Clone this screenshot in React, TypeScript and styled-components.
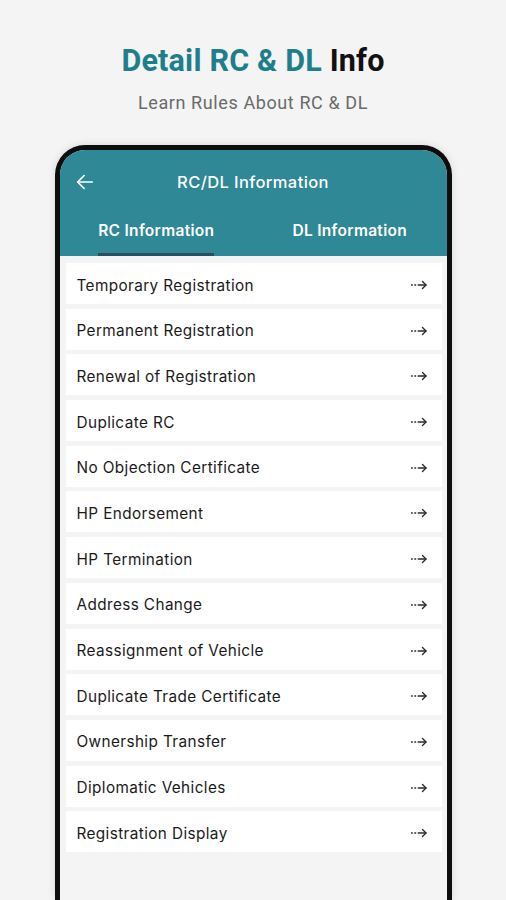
import React, { useState } from 'react';
import styled, { createGlobalStyle } from 'styled-components';

const GlobalStyle = createGlobalStyle`
  html, body {
    margin: 0;
    padding: 0;
    background: #f4f4f4;
  }
  body {
    font-family: Roboto, 'Liberation Sans', sans-serif;
  }
`;

const items = [
  'Temporary Registration',
  'Permanent Registration',
  'Renewal of Registration',
  'Duplicate RC',
  'No Objection Certificate',
  'HP Endorsement',
  'HP Termination',
  'Address Change',
  'Reassignment of Vehicle',
  'Duplicate Trade Certificate',
  'Ownership Transfer',
  'Diplomatic Vehicles',
  'Registration Display',
];

const DashArrow = () => (
  <svg width="18" height="12" viewBox="0 0 18 12" fill="none" stroke="#2a2a2a" strokeWidth="1.4" strokeLinecap="round" strokeLinejoin="round">
    <line x1="1.5" y1="6" x2="2.3" y2="6" />
    <line x1="4.8" y1="6" x2="5.6" y2="6" />
    <line x1="8.2" y1="6" x2="16" y2="6" />
    <polyline points="12.5,2.5 16,6 12.5,9.5" />
  </svg>
);

const BackArrow = () => (
  <svg width="22" height="22" viewBox="0 0 24 24" fill="none" stroke="#fff" strokeWidth="1.8" strokeLinecap="round" strokeLinejoin="round">
    <line x1="20" y1="12" x2="4" y2="12" />
    <polyline points="11,5 4,12 11,19" />
  </svg>
);

const App: React.FC = () => {
  const [tab, setTab] = useState(0);
  return (
    <>
      <GlobalStyle />
      <Page>
        <Title>
          <Teal>Detail RC &amp; DL</Teal> Info
        </Title>
        <Subtitle>Learn Rules About RC &amp; DL</Subtitle>
        <Phone>
          <Header>
            <Toolbar>
              <BackButton>
                <BackArrow />
              </BackButton>
              <ToolbarTitle>RC/DL Information</ToolbarTitle>
            </Toolbar>
            <Tabs>
              <Tab onClick={() => setTab(0)}>
                <TabLabel active={tab === 0}>RC Information</TabLabel>
              </Tab>
              <Tab onClick={() => setTab(1)}>
                <TabLabel active={tab === 1}>DL Information</TabLabel>
              </Tab>
            </Tabs>
          </Header>
          <List>
            {items.map(item => (
              <Row key={item}>
                <RowText>{item}</RowText>
                <DashArrow />
              </Row>
            ))}
          </List>
        </Phone>
      </Page>
    </>
  );
};

export default App;

const Page = styled.div`
  height: 900px;
  overflow: hidden;
  display: flex;
  flex-direction: column;
  align-items: center;
  padding-top: 43px;
  box-sizing: border-box;
`;

const Title = styled.h1`
  margin: 0;
  font-size: 30.5px;
  line-height: 36px;
  font-weight: 700;
  color: #111;
  letter-spacing: 0.2px;
`;

const Teal = styled.span`
  color: #1e7f8c;
`;

const Subtitle = styled.div`
  margin-top: 13px;
  font-size: 18px;
  line-height: 22px;
  letter-spacing: 0.6px;
  color: #6a6a6a;
`;

const Phone = styled.div`
  margin-top: 31px;
  width: 397px;
  flex: 1;
  box-sizing: border-box;
  border: 5px solid #0d0d0d;
  border-bottom: none;
  border-radius: 30px 30px 0 0;
  overflow: hidden;
  background: #f4f4f4;
  box-shadow: 0 0 8px rgba(0, 0, 0, 0.12);
`;

const Header = styled.div`
  background: #2e8896;
  color: #fff;
  font-family: Inter, 'Noto Sans', sans-serif;
`;

const Toolbar = styled.div`
  position: relative;
  height: 64px;
  display: flex;
  align-items: center;
  justify-content: center;
`;

const BackButton = styled.div`
  position: absolute;
  left: 14px;
  top: 21px;
  display: flex;
`;

const ToolbarTitle = styled.div`
  font-size: 16.5px;
  font-weight: 500;
  letter-spacing: 0.4px;
`;

const Tabs = styled.div`
  display: flex;
  height: 42px;
`;

const Tab = styled.div`
  flex: 1;
  display: flex;
  justify-content: center;
  cursor: pointer;
`;

const TabLabel = styled.div<{ active: boolean }>`
  padding-top: 8px;
  font-size: 15.5px;
  font-weight: 600;
  letter-spacing: 0.3px;
  line-height: 18px;
  height: 31px;
  border-bottom: 3px solid ${p => (p.active ? '#26505c' : 'transparent')};
`;

const List = styled.div`
  display: flex;
  flex-direction: column;
  gap: 4.7px;
  padding: 7px 5px 0 6px;
`;

const Row = styled.div`
  height: 41px;
  box-sizing: border-box;
  background: #fff;
  display: flex;
  align-items: center;
  justify-content: space-between;
  padding: 3px 14px 0 11px;
`;

const RowText = styled.span`
  font-family: Inter, 'Noto Sans', sans-serif;
  font-size: 15.3px;
  letter-spacing: 0.4px;
  color: #1a1a1a;
`;
